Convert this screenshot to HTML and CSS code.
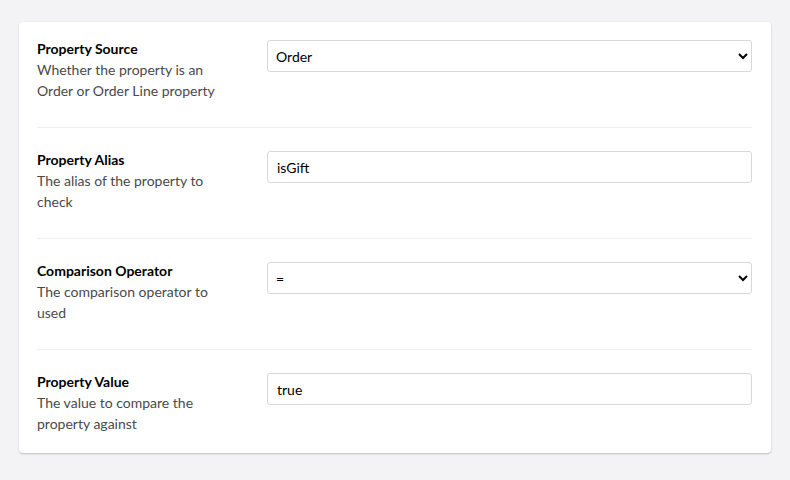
FILE: index.html
```html
<!DOCTYPE html>
<html lang="en">
<head>
<meta charset="utf-8">
<title>Properties</title>
<link rel="stylesheet" href="styles.css">
</head>
<body>
<div class="card">
  <div class="row">
    <div class="label">
      <div class="name">Property Source</div>
      <div class="desc">Whether the property is an Order or Order Line property</div>
    </div>
    <div class="control">
      <select class="field select">
        <option>Order</option>
        <option>Order Line</option>
      </select>
    </div>
  </div>
  <div class="row">
    <div class="label">
      <div class="name">Property Alias</div>
      <div class="desc">The alias of the property to check</div>
    </div>
    <div class="control">
      <input class="field" type="text" value="isGift">
    </div>
  </div>
  <div class="row">
    <div class="label">
      <div class="name">Comparison Operator</div>
      <div class="desc">The comparison operator to used</div>
    </div>
    <div class="control">
      <select class="field select">
        <option>=</option>
        <option>!=</option>
      </select>
    </div>
  </div>
  <div class="row">
    <div class="label">
      <div class="name">Property Value</div>
      <div class="desc">The value to compare the property against</div>
    </div>
    <div class="control">
      <input class="field" type="text" value="true">
    </div>
  </div>
</div>
</body>
</html>
```

FILE: styles.css
```css
html, body {
  margin: 0;
  background: #f3f3f5;
}
body {
  padding: 22px 19px;
  font-family: Lato, "Open Sans", sans-serif;
  font-size: 14px;
  line-height: 21px;
  color: #000;
}
.card {
  background: #fff;
  border-radius: 4px;
  box-shadow: 0 1px 2px rgba(0, 0, 0, 0.22);
  padding: 16px 19px 19px 18px;
}
.row {
  display: flex;
  align-items: flex-start;
  padding: 21px 0 26px;
  border-bottom: 1px solid #f0f0f2;
}
.row:first-child {
  padding-top: 0;
}
.row:last-child {
  padding-bottom: 0;
  border-bottom: none;
}
.label {
  width: 190px;
  margin-right: 40px;
  flex: none;
}
.name {
  font-weight: 700;
  color: #000;
}
.desc {
  color: #4a494d;
}
.control {
  flex: 1;
  padding-top: 2px;
}
.field {
  box-sizing: border-box;
  display: block;
  width: 100%;
  height: 32px;
  margin: 0;
  border: 1px solid #d8d7d9;
  border-radius: 3px;
  background: #fff;
  font-family: Lato, "Open Sans", sans-serif;
  font-size: 14px;
  color: #000;
  padding: 0 9px;
  outline: none;
}
.select {
  padding-left: 4px;
}
```
